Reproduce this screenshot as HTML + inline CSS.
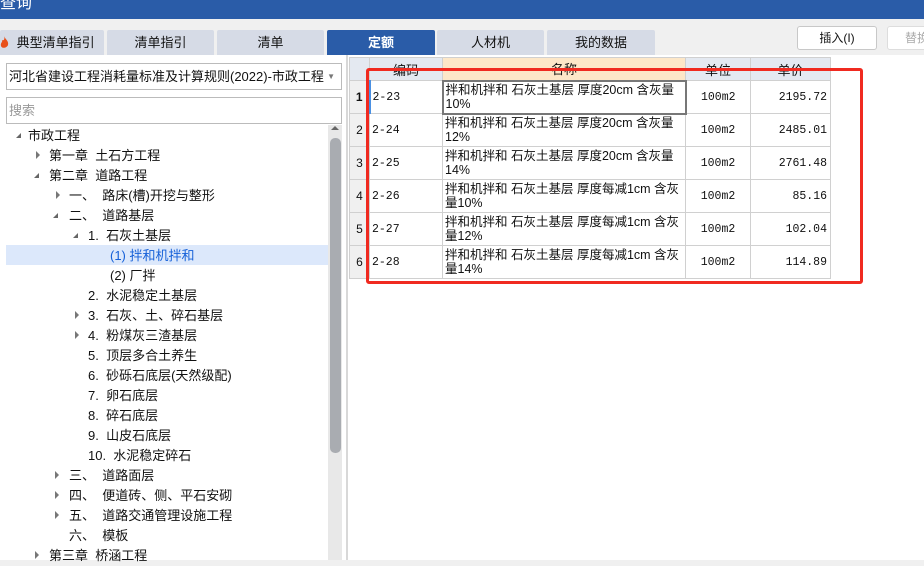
<!DOCTYPE html>
<html><head><meta charset="utf-8"><style>
*{margin:0;padding:0;box-sizing:border-box}
body{width:924px;height:560px;overflow:hidden;background:#f0f0f0;font-family:"Liberation Sans","Noto Sans CJK SC",sans-serif;font-size:12px;color:#111;position:relative}
.abs{position:absolute}
.title{left:0;top:0;width:924px;height:19px;background:#2a5ca8;color:#fff;font-size:16px;line-height:8px;padding-left:0;overflow:hidden}
.tab{top:30px;height:25px;background:#d6dbe6;text-align:center;line-height:25px;font-size:13px;border-radius:2px 2px 0 0}
.tab.on{background:#2a5ca8;color:#fff;font-weight:bold}
.btn{top:26px;height:24px;border:1px solid #c8c8c8;background:#fff;border-radius:3px;text-align:center;line-height:22px;font-size:12px}
.left{left:0;top:55px;width:346px;height:505px;background:#fff}
.box{left:6px;width:336px;border:1px solid #bbb;background:#fff}
.tr{position:absolute;height:20px;line-height:21px;font-size:13px;white-space:nowrap}
.ar{position:absolute;width:0;height:0}
.ex{border-left:5px solid transparent;border-bottom:5px solid #666}
.co{border-top:4px solid transparent;border-bottom:4px solid transparent;border-left:4px solid #777}
table{border-collapse:collapse;position:absolute;left:349px;top:57px;background:#fff;font-size:12px}
td{border:1px solid #d0d0d0;height:33px;vertical-align:middle}
th{border:1px solid #d0d0d0;height:23px;background:#e4e9f1;font-weight:normal;font-size:13px}
td.n{background:#f0f0f0;text-align:center;width:20px}
td.c{padding-left:2px;font-family:"Liberation Mono","Noto Sans CJK SC",monospace;font-size:11.5px}
td.m{padding-left:2px;line-height:14px;font-size:12.5px;white-space:nowrap;overflow:hidden}
td.u{text-align:center;font-family:"Liberation Mono",monospace;font-size:11.5px}
td.p{text-align:right;padding-right:3px;font-family:"Liberation Mono",monospace;font-size:11.5px}
</style></head><body>
<div class="abs title">查询</div>
<div class="abs tab" style="left:0;width:104px"><svg style="position:absolute;left:0;top:6px" width="9" height="13" viewBox="0 0 9 13"><path d="M4 0C5 3 9 5 8 9C7 12 2 13 1 10C0 7 3 6 2 4C4 5 5 3 4 0Z" fill="#e8501a"/></svg>&nbsp;&nbsp;典型清单指引</div>
<div class="abs tab" style="left:107px;width:107px">清单指引</div>
<div class="abs tab" style="left:217px;width:107px">清单</div>
<div class="abs tab on" style="left:327px;width:108px">定额</div>
<div class="abs tab" style="left:437px;width:107px">人材机</div>
<div class="abs tab" style="left:547px;width:108px">我的数据</div>
<div class="abs btn" style="left:797px;width:80px">插入(I)</div>
<div class="abs btn" style="left:887px;width:60px;color:#aaa;border-color:#ddd">替换</div>
<div class="abs" style="left:346px;top:55px;width:578px;height:505px;background:#fff;border-left:2px solid #d8d8d8"></div>
<div class="abs left"></div>
<div class="abs box" style="top:63px;height:27px;line-height:25px;padding-left:2px;font-size:13px">河北省建设工程消耗量标准及计算规则(2022)-市政工程<span style="position:absolute;right:6px;top:0;color:#777;font-size:8px">▼</span></div>
<div class="abs box" style="top:97px;height:27px;line-height:25px;padding-left:2px;color:#999;font-size:13px">搜索</div>
<div class="abs" style="left:328px;top:125px;width:14px;height:435px;background:#e8e8e8"></div>
<div class="abs" style="left:331px;top:126px;width:0;height:0;border-left:4px solid transparent;border-right:4px solid transparent;border-bottom:4px solid #666"></div>
<div class="abs" style="left:330px;top:138px;width:11px;height:315px;background:#a9acb1;border-radius:5px"></div>
<div class="abs" style="left:6px;top:245px;width:322px;height:20px;background:#dce8fb"></div>
<div class="abs">
<span class="ar ex" style="left:16px;top:133px"></span><div class="tr" style="left:28px;top:125px">市政工程</div>
<span class="ar co" style="left:36px;top:151px"></span><div class="tr" style="left:49px;top:145px">第一章&nbsp;&nbsp;土石方工程</div>
<span class="ar ex" style="left:34px;top:173px"></span><div class="tr" style="left:49px;top:165px">第二章&nbsp;&nbsp;道路工程</div>
<span class="ar co" style="left:56px;top:191px"></span><div class="tr" style="left:69px;top:185px">一、&nbsp;&nbsp;路床(槽)开挖与整形</div>
<span class="ar ex" style="left:53px;top:213px"></span><div class="tr" style="left:69px;top:205px">二、&nbsp;&nbsp;道路基层</div>
<span class="ar ex" style="left:73px;top:233px"></span><div class="tr" style="left:88px;top:225px">1.&nbsp;&nbsp;石灰土基层</div>
<div class="tr" style="left:110px;top:245px;color:#1560d8">(1)&nbsp;拌和机拌和</div>
<div class="tr" style="left:110px;top:265px">(2)&nbsp;厂拌</div>
<div class="tr" style="left:88px;top:285px">2.&nbsp;&nbsp;水泥稳定土基层</div>
<span class="ar co" style="left:75px;top:311px"></span><div class="tr" style="left:88px;top:305px">3.&nbsp;&nbsp;石灰、土、碎石基层</div>
<span class="ar co" style="left:75px;top:331px"></span><div class="tr" style="left:88px;top:325px">4.&nbsp;&nbsp;粉煤灰三渣基层</div>
<div class="tr" style="left:88px;top:345px">5.&nbsp;&nbsp;顶层多合土养生</div>
<div class="tr" style="left:88px;top:365px">6.&nbsp;&nbsp;砂砾石底层(天然级配)</div>
<div class="tr" style="left:88px;top:385px">7.&nbsp;&nbsp;卵石底层</div>
<div class="tr" style="left:88px;top:405px">8.&nbsp;&nbsp;碎石底层</div>
<div class="tr" style="left:88px;top:425px">9.&nbsp;&nbsp;山皮石底层</div>
<div class="tr" style="left:88px;top:445px">10.&nbsp;&nbsp;水泥稳定碎石</div>
<span class="ar co" style="left:55px;top:471px"></span><div class="tr" style="left:69px;top:465px">三、&nbsp;&nbsp;道路面层</div>
<span class="ar co" style="left:55px;top:491px"></span><div class="tr" style="left:69px;top:485px">四、&nbsp;&nbsp;便道砖、侧、平石安砌</div>
<span class="ar co" style="left:55px;top:511px"></span><div class="tr" style="left:69px;top:505px">五、&nbsp;&nbsp;道路交通管理设施工程</div>
<div class="tr" style="left:69px;top:525px">六、&nbsp;&nbsp;模板</div>
<span class="ar co" style="left:35px;top:551px"></span><div class="tr" style="left:49px;top:545px">第三章&nbsp;&nbsp;桥涵工程</div>
</div>
<table>
<tr><th style="width:20px"></th><th style="width:73px">编码</th><th style="width:243px;max-width:243px;background:#fde7c8">名称</th><th style="width:65px">单位</th><th style="width:80px">单价</th></tr>
<tr><td class="n"><b>1</b></td><td class="c" style="border-left:2px solid #4a90e2">2-23</td><td class="m" style="border:2px solid #777">拌和机拌和 石灰土基层 厚度20cm 含灰量<br>10%</td><td class="u">100m2</td><td class="p">2195.72</td></tr>
<tr><td class="n">2</td><td class="c">2-24</td><td class="m">拌和机拌和 石灰土基层 厚度20cm 含灰量<br>12%</td><td class="u">100m2</td><td class="p">2485.01</td></tr>
<tr><td class="n">3</td><td class="c">2-25</td><td class="m">拌和机拌和 石灰土基层 厚度20cm 含灰量<br>14%</td><td class="u">100m2</td><td class="p">2761.48</td></tr>
<tr><td class="n">4</td><td class="c">2-26</td><td class="m">拌和机拌和 石灰土基层 厚度每减1cm 含灰<br>量10%</td><td class="u">100m2</td><td class="p">85.16</td></tr>
<tr><td class="n">5</td><td class="c">2-27</td><td class="m">拌和机拌和 石灰土基层 厚度每减1cm 含灰<br>量12%</td><td class="u">100m2</td><td class="p">102.04</td></tr>
<tr><td class="n">6</td><td class="c">2-28</td><td class="m">拌和机拌和 石灰土基层 厚度每减1cm 含灰<br>量14%</td><td class="u">100m2</td><td class="p">114.89</td></tr>
</table>
<div class="abs" style="left:366px;top:68px;width:497px;height:216px;border:3px solid #f02a20;border-radius:3px"></div>
</body></html>
